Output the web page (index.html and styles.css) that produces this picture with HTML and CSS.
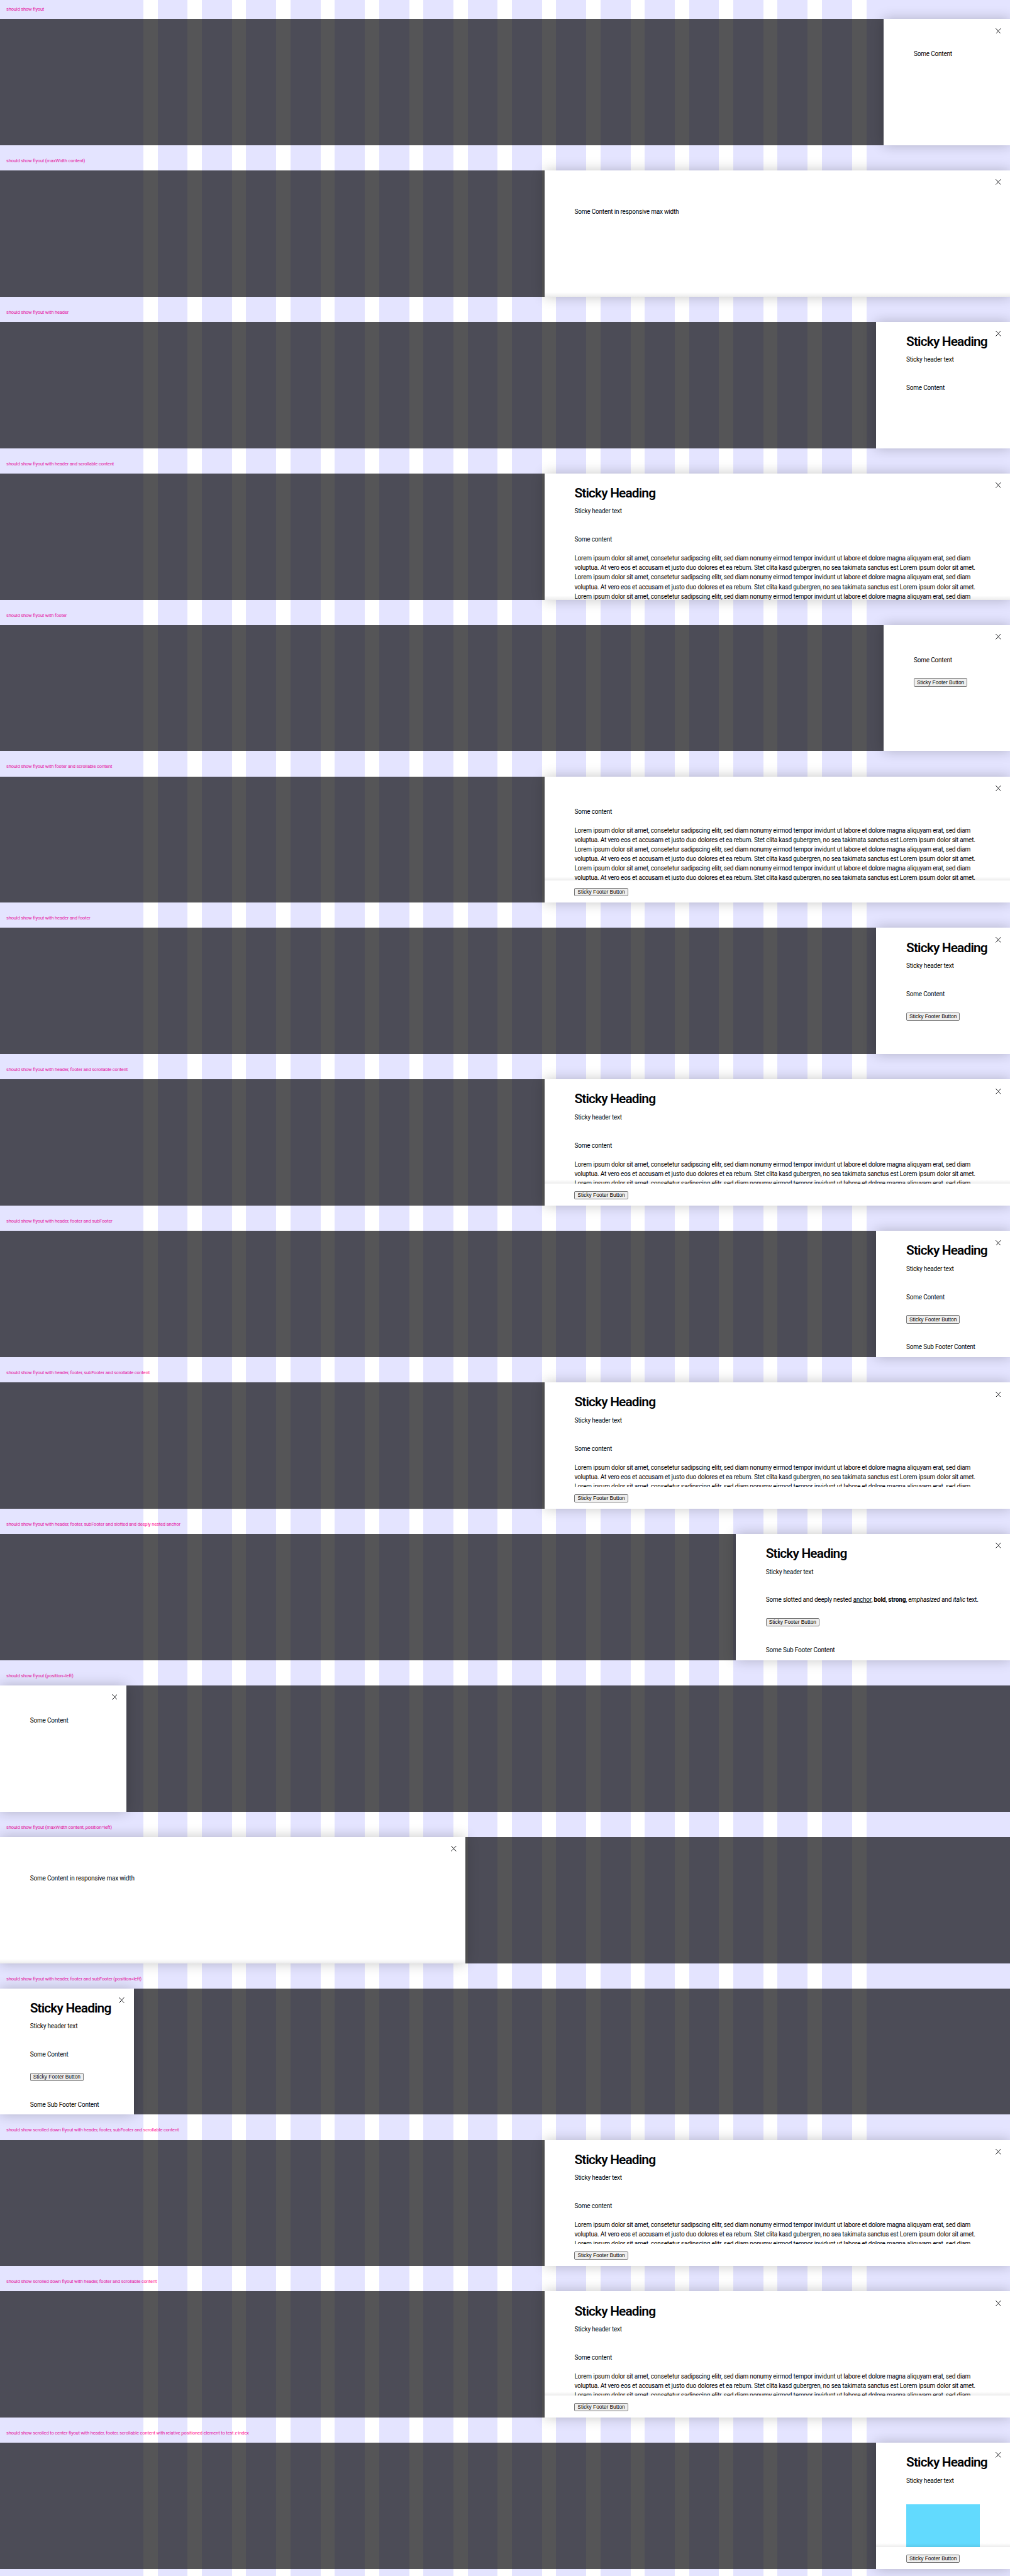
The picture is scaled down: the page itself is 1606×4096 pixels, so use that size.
FILE: index.html
```html
<!DOCTYPE html>
<html lang="en">
<head>
<meta charset="utf-8">
<title>Flyout states</title>
<link rel="stylesheet" href="styles.css">
</head>
<body>
<svg class="defs" aria-hidden="true"><symbol id="close" viewBox="0 0 14 14"><path d="M0 .6H.9L7 6.6 13.1.6H14M0 13.4H.9L7 7.4 13.1 13.4H14M6.6 7H7.4" fill="none" stroke="#010205" stroke-width="1.5"/></symbol></svg>

<section class="case">
<h2 class="label">should show flyout</h2>
<div class="stage"><div class="flyout"><svg class="close"><use href="#close"/></svg>
<div class="body"><p>Some Content</p></div>
</div></div>
</section>

<section class="case">
<h2 class="label">should show flyout (maxWidth content)</h2>
<div class="stage"><div class="flyout wide"><svg class="close"><use href="#close"/></svg>
<div class="body inset shade"><p>Some Content in responsive max width</p></div>
</div></div>
</section>

<section class="case">
<h2 class="label">should show flyout with header</h2>
<div class="stage"><div class="flyout titled"><svg class="close"><use href="#close"/></svg>
<header class="head"><h3>Sticky Heading</h3><p>Sticky header text</p></header>
<div class="body"><p>Some Content</p></div>
</div></div>
</section>

<section class="case">
<h2 class="label">should show flyout with header and scrollable content</h2>
<div class="stage"><div class="flyout wide"><svg class="close"><use href="#close"/></svg>
<header class="head"><h3>Sticky Heading</h3><p>Sticky header text</p></header>
<div class="body fill shade"><p>Some content</p>
<p class="lorem">Lorem ipsum dolor sit amet, consetetur sadipscing elitr, sed diam nonumy eirmod tempor invidunt ut labore et dolore magna aliquyam erat, sed diam<br>voluptua. At vero eos et accusam et justo duo dolores et ea rebum. Stet clita kasd gubergren, no sea takimata sanctus est Lorem ipsum dolor sit amet.<br>Lorem ipsum dolor sit amet, consetetur sadipscing elitr, sed diam nonumy eirmod tempor invidunt ut labore et dolore magna aliquyam erat, sed diam<br>voluptua. At vero eos et accusam et justo duo dolores et ea rebum. Stet clita kasd gubergren, no sea takimata sanctus est Lorem ipsum dolor sit amet.<br>Lorem ipsum dolor sit amet, consetetur sadipscing elitr, sed diam nonumy eirmod tempor invidunt ut labore et dolore magna aliquyam erat, sed diam</p></div>
</div></div>
</section>

<section class="case">
<h2 class="label">should show flyout with footer</h2>
<div class="stage"><div class="flyout"><svg class="close"><use href="#close"/></svg>
<div class="body"><p>Some Content</p></div>
<footer class="foot"><button>Sticky Footer Button</button></footer>
</div></div>
</section>

<section class="case">
<h2 class="label">should show flyout with footer and scrollable content</h2>
<div class="stage"><div class="flyout wide"><svg class="close"><use href="#close"/></svg>
<div class="body fill shade"><p>Some content</p>
<p class="lorem">Lorem ipsum dolor sit amet, consetetur sadipscing elitr, sed diam nonumy eirmod tempor invidunt ut labore et dolore magna aliquyam erat, sed diam<br>voluptua. At vero eos et accusam et justo duo dolores et ea rebum. Stet clita kasd gubergren, no sea takimata sanctus est Lorem ipsum dolor sit amet.<br>Lorem ipsum dolor sit amet, consetetur sadipscing elitr, sed diam nonumy eirmod tempor invidunt ut labore et dolore magna aliquyam erat, sed diam<br>voluptua. At vero eos et accusam et justo duo dolores et ea rebum. Stet clita kasd gubergren, no sea takimata sanctus est Lorem ipsum dolor sit amet.<br>Lorem ipsum dolor sit amet, consetetur sadipscing elitr, sed diam nonumy eirmod tempor invidunt ut labore et dolore magna aliquyam erat, sed diam<br>voluptua. At vero eos et accusam et justo duo dolores et ea rebum. Stet clita kasd gubergren, no sea takimata sanctus est Lorem ipsum dolor sit amet.</p></div>
<footer class="foot"><button>Sticky Footer Button</button></footer>
</div></div>
</section>

<section class="case">
<h2 class="label">should show flyout with header and footer</h2>
<div class="stage"><div class="flyout titled"><svg class="close"><use href="#close"/></svg>
<header class="head"><h3>Sticky Heading</h3><p>Sticky header text</p></header>
<div class="body"><p>Some Content</p></div>
<footer class="foot"><button>Sticky Footer Button</button></footer>
</div></div>
</section>

<section class="case">
<h2 class="label">should show flyout with header, footer and scrollable content</h2>
<div class="stage"><div class="flyout wide"><svg class="close"><use href="#close"/></svg>
<header class="head"><h3>Sticky Heading</h3><p>Sticky header text</p></header>
<div class="body fill shade"><p>Some content</p>
<p class="lorem">Lorem ipsum dolor sit amet, consetetur sadipscing elitr, sed diam nonumy eirmod tempor invidunt ut labore et dolore magna aliquyam erat, sed diam<br>voluptua. At vero eos et accusam et justo duo dolores et ea rebum. Stet clita kasd gubergren, no sea takimata sanctus est Lorem ipsum dolor sit amet.<br>Lorem ipsum dolor sit amet, consetetur sadipscing elitr, sed diam nonumy eirmod tempor invidunt ut labore et dolore magna aliquyam erat, sed diam</p></div>
<footer class="foot"><button>Sticky Footer Button</button></footer>
</div></div>
</section>

<section class="case">
<h2 class="label">should show flyout with header, footer and subFooter</h2>
<div class="stage"><div class="flyout titled"><svg class="close"><use href="#close"/></svg>
<header class="head"><h3>Sticky Heading</h3><p>Sticky header text</p></header>
<div class="body"><p>Some Content</p></div>
<footer class="foot"><button>Sticky Footer Button</button></footer>
<div class="sub"><p>Some Sub Footer Content</p></div>
</div></div>
</section>

<section class="case">
<h2 class="label">should show flyout with header, footer, subFooter and scrollable content</h2>
<div class="stage"><div class="flyout wide"><svg class="close"><use href="#close"/></svg>
<header class="head"><h3>Sticky Heading</h3><p>Sticky header text</p></header>
<div class="body fill"><p>Some content</p>
<p class="lorem">Lorem ipsum dolor sit amet, consetetur sadipscing elitr, sed diam nonumy eirmod tempor invidunt ut labore et dolore magna aliquyam erat, sed diam<br>voluptua. At vero eos et accusam et justo duo dolores et ea rebum. Stet clita kasd gubergren, no sea takimata sanctus est Lorem ipsum dolor sit amet.<br>Lorem ipsum dolor sit amet, consetetur sadipscing elitr, sed diam nonumy eirmod tempor invidunt ut labore et dolore magna aliquyam erat, sed diam</p></div>
<footer class="foot"><button>Sticky Footer Button</button></footer>
</div></div>
</section>

<section class="case">
<h2 class="label">should show flyout with header, footer, subFooter and slotted and deeply nested anchor</h2>
<div class="stage"><div class="flyout nested"><svg class="close"><use href="#close"/></svg>
<header class="head"><h3>Sticky Heading</h3><p>Sticky header text</p></header>
<div class="body"><p>Some slotted and deeply nested <a>anchor</a>, <b>bold</b>, <strong>strong</strong>, <em>emphasized</em> and <i>italic</i> text.</p></div>
<footer class="foot"><button>Sticky Footer Button</button></footer>
<div class="sub"><p>Some Sub Footer Content</p></div>
</div></div>
</section>

<section class="case">
<h2 class="label">should show flyout (position=left)</h2>
<div class="stage left"><div class="flyout"><svg class="close"><use href="#close"/></svg>
<div class="body"><p>Some Content</p></div>
</div></div>
</section>

<section class="case">
<h2 class="label">should show flyout (maxWidth content, position=left)</h2>
<div class="stage left"><div class="flyout wide"><svg class="close"><use href="#close"/></svg>
<div class="body inset shade"><p>Some Content in responsive max width</p></div>
</div></div>
</section>

<section class="case">
<h2 class="label">should show flyout with header, footer and subFooter (position=left)</h2>
<div class="stage left"><div class="flyout titled"><svg class="close"><use href="#close"/></svg>
<header class="head"><h3>Sticky Heading</h3><p>Sticky header text</p></header>
<div class="body"><p>Some Content</p></div>
<footer class="foot"><button>Sticky Footer Button</button></footer>
<div class="sub"><p>Some Sub Footer Content</p></div>
</div></div>
</section>

<section class="case">
<h2 class="label">should show scrolled down flyout with header, footer, subFooter and scrollable content</h2>
<div class="stage"><div class="flyout wide"><svg class="close"><use href="#close"/></svg>
<header class="head"><h3>Sticky Heading</h3><p>Sticky header text</p></header>
<div class="body fill"><p>Some content</p>
<p class="lorem">Lorem ipsum dolor sit amet, consetetur sadipscing elitr, sed diam nonumy eirmod tempor invidunt ut labore et dolore magna aliquyam erat, sed diam<br>voluptua. At vero eos et accusam et justo duo dolores et ea rebum. Stet clita kasd gubergren, no sea takimata sanctus est Lorem ipsum dolor sit amet.<br>Lorem ipsum dolor sit amet, consetetur sadipscing elitr, sed diam nonumy eirmod tempor invidunt ut labore et dolore magna aliquyam erat, sed diam</p></div>
<footer class="foot"><button>Sticky Footer Button</button></footer>
</div></div>
</section>

<section class="case">
<h2 class="label">should show scrolled down flyout with header, footer and scrollable content</h2>
<div class="stage"><div class="flyout wide"><svg class="close"><use href="#close"/></svg>
<header class="head"><h3>Sticky Heading</h3><p>Sticky header text</p></header>
<div class="body fill shade"><p>Some content</p>
<p class="lorem">Lorem ipsum dolor sit amet, consetetur sadipscing elitr, sed diam nonumy eirmod tempor invidunt ut labore et dolore magna aliquyam erat, sed diam<br>voluptua. At vero eos et accusam et justo duo dolores et ea rebum. Stet clita kasd gubergren, no sea takimata sanctus est Lorem ipsum dolor sit amet.<br>Lorem ipsum dolor sit amet, consetetur sadipscing elitr, sed diam nonumy eirmod tempor invidunt ut labore et dolore magna aliquyam erat, sed diam</p></div>
<footer class="foot"><button>Sticky Footer Button</button></footer>
</div></div>
</section>

<section class="case">
<h2 class="label">should show scrolled to center flyout with header, footer, scrollable content with relative positioned element to test z-index</h2>
<div class="stage"><div class="flyout titled"><svg class="close"><use href="#close"/></svg>
<header class="head"><h3>Sticky Heading</h3><p>Sticky header text</p></header>
<div class="body fill shade"><div class="block"></div></div>
<footer class="foot"><button>Sticky Footer Button</button></footer>
</div></div>
</section>
</body>
</html>
```
FILE: styles.css
```css
/* 1rem = 16 design pixels */
html {
  font-size: calc(1606px / 160);
  background: #fff;
}

* {
  box-sizing: border-box;
  margin: 0;
  padding: 0;
}

body {
  position: relative;
  height: 4096px;
  overflow: hidden;
  color: #010205;
  font: 1rem/1.5rem Roboto, sans-serif;
  letter-spacing: -0.02rem;
  --tint: rgba(0, 0, 255, 0.106);
}

/* page grid, laid over the labels */
body::before {
  content: "";
  position: absolute;
  inset: 0;
  z-index: 1;
  background:
    linear-gradient(var(--tint), var(--tint)) left / 22.75rem 100% no-repeat,
    repeating-linear-gradient(90deg, transparent 0 2.25rem, var(--tint) 2.25rem 7.015625rem) 22.75rem 0 / 114.5rem 100% no-repeat,
    linear-gradient(var(--tint), var(--tint)) right / 22.75rem 100% no-repeat;
}

.defs {
  display: none;
}

.case {
  height: 24rem;
}

.label {
  height: 3rem;
  padding-left: 1rem;
  color: #ff1493;
  font-size: 0.75rem;
  font-weight: 400;
  line-height: 3rem;
  letter-spacing: -0.016rem;
  white-space: nowrap;
}

.stage {
  position: relative;
  z-index: 2;
  display: flex;
  justify-content: flex-end;
  height: 20rem;
  background: rgba(1, 2, 5, 0.67);
}

.stage.left {
  justify-content: flex-start;
}

.flyout {
  position: relative;
  display: flex;
  flex-direction: column;
  width: 20rem;
  height: 20rem;
  padding-top: 4.78rem;
  background: #fff;
  box-shadow: 0 0 1.9rem rgba(0, 0, 0, 0.23);
  white-space: nowrap;
}

.flyout.wide {
  width: 73.75rem;
}

.flyout.titled {
  width: 21.1875rem;
}

.flyout.nested {
  width: 43.4375rem;
}

.flyout:has(.head) {
  padding-top: 1.8rem;
}

.close {
  position: absolute;
  top: 1.4375rem;
  right: 1.4375rem;
  width: 0.875rem;
  height: 0.875rem;
}

.head,
.body,
.foot,
.sub {
  padding-left: 4.75rem;
}

.head {
  height: 7.91rem;
}

.head h3 {
  margin-bottom: 0.68rem;
  font-size: 2.08rem;
  font-weight: 600;
  line-height: 2.75rem;
  letter-spacing: -0.083rem;
}

.body {
  position: relative;
  overflow: hidden;
}

.body.inset {
  flex: 1;
  padding-top: 1rem;
}

.body.fill {
  flex: 1;
}

/* scroll hint above the lower edge */
.body.shade::after {
  content: "";
  position: absolute;
  right: 0;
  bottom: 0;
  left: 0;
  height: 0.625rem;
  background: linear-gradient(transparent, rgba(0, 0, 0, 0.075));
}

.lorem {
  margin-top: 1.5rem;
}

.foot {
  flex: none;
  height: 3.5rem;
  padding-top: 1.1875rem;
  line-height: 0;
}

.body:not(.fill) + .foot {
  margin-top: 0.98rem;
}

button {
  width: 8.5rem;
  height: 1.3125rem;
  border: 0.0625rem solid #767676;
  border-radius: 0.1875rem;
  background: #efefef;
  color: #000;
  font: 0.8333rem/1.1rem "Liberation Sans", sans-serif;
}

.sub {
  padding-top: 1.97rem;
}

a {
  text-decoration: underline;
}

em,
i {
  font-style: italic;
}

.block {
  width: 11.6875rem;
  height: 100%;
  background: #62dafe;
}
```
